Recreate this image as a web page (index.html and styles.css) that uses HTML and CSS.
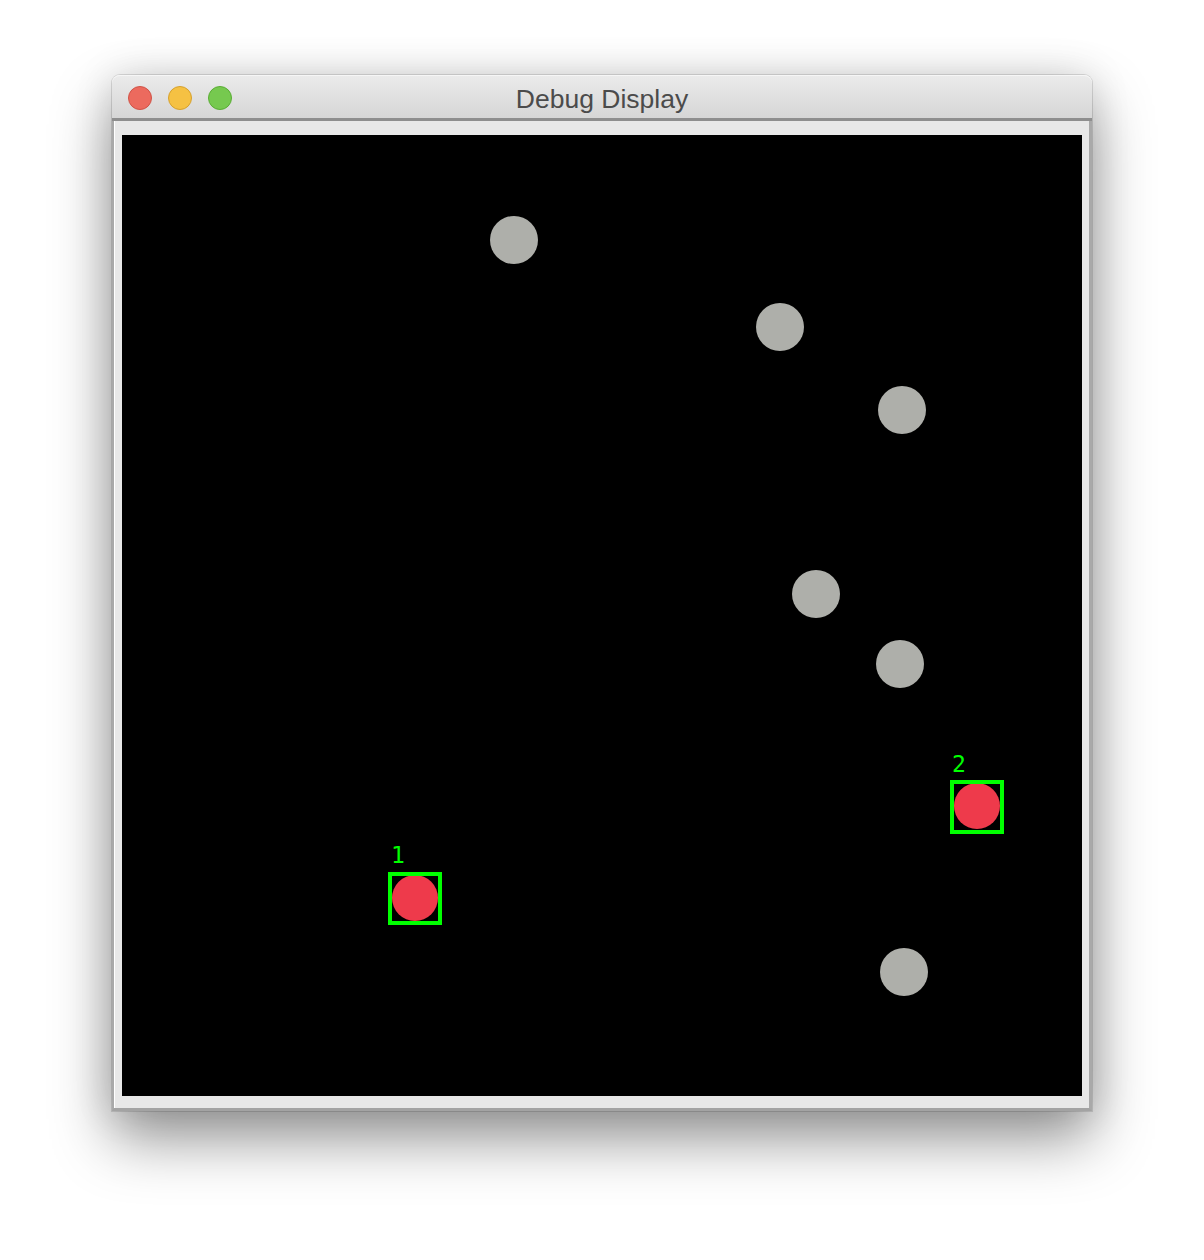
FILE: index.html
```html
<!DOCTYPE html>
<html>
<head>
<meta charset="utf-8">
<link rel="stylesheet" href="styles.css">
</head>
<body>
<div class="window">
  <div class="titlebar">
    <div class="lights">
      <span class="light red"></span>
      <span class="light yellow"></span>
      <span class="light green"></span>
    </div>
    <div class="title">Debug Display</div>
  </div>
  <div class="frame">
    <svg class="canvas" width="960" height="961" viewBox="0 0 960 961">
      <rect x="0" y="0" width="960" height="961" fill="#000"/>
      <g fill="#aeafaa">
        <circle cx="392" cy="105" r="24"/>
        <circle cx="658" cy="192" r="24"/>
        <circle cx="780" cy="275" r="24"/>
        <circle cx="694" cy="459" r="24"/>
        <circle cx="778" cy="529" r="24"/>
        <circle cx="782" cy="837" r="24"/>
      </g>
      <g fill="#ee3a4b">
        <circle cx="293" cy="763" r="23"/>
        <circle cx="855" cy="671" r="23"/>
      </g>
      <g fill="none" stroke="#00ff00" stroke-width="4">
        <rect x="268" y="739" width="50" height="49"/>
        <rect x="830" y="647" width="50" height="50"/>
      </g>
      <text class="label" x="269" y="728">1</text>
      <text class="label" x="830" y="637">2</text>
    </svg>
  </div>
</div>
</body>
</html>
```
FILE: styles.css
```css
html, body {
  margin: 0;
  padding: 0;
  background: #ffffff;
}
body {
  width: 1204px;
  height: 1260px;
  overflow: hidden;
  padding-top: 75px;
  box-sizing: border-box;
}
.window {
  width: 980px;
  margin-left: 112px;
  border-radius: 8px 8px 0 0;
  box-shadow: 0 28px 60px rgba(0, 0, 0, 0.42), 0 0 40px rgba(0, 0, 0, 0.12), 0 0 0 1px rgba(0, 0, 0, 0.12);
  background: #e8e8e8;
}
.titlebar {
  position: relative;
  height: 43px;
  border-radius: 8px 8px 0 0;
  background: linear-gradient(#ebebeb, #d6d6d6);
  border-bottom: 3px solid #8e8e8e;
  box-shadow: inset 0 1px 0 #f6f6f6;
  display: flex;
  align-items: center;
  justify-content: center;
}
.lights {
  position: absolute;
  left: 16px;
  top: 11px;
  display: flex;
  gap: 16px;
}
.light {
  width: 24px;
  height: 24px;
  border-radius: 50%;
  box-sizing: border-box;
}
.red { background: #ec6a5e; border: 1px solid #d05347; }
.yellow { background: #f5c143; border: 1px solid #d6a12e; }
.green { background: #76c94f; border: 1px solid #5aad35; }
.title {
  font-family: "Liberation Sans", Arial, sans-serif;
  font-size: 26.5px;
  color: #4b4b4b;
  margin-top: 6px;
}
.frame {
  background: #e8e8e8;
  border-left: 2px solid #a9a9a9;
  border-right: 3px solid #a9a9a9;
  border-bottom: 3px solid #a3a3a3;
  padding: 14px 7px 12px 8px;
  box-shadow: inset 1px 0 0 #ffffff;
}
.canvas {
  display: block;
}
.label {
  font-family: "DejaVu Sans Mono", monospace;
  font-size: 23px;
  fill: #00ff00;
}
```
